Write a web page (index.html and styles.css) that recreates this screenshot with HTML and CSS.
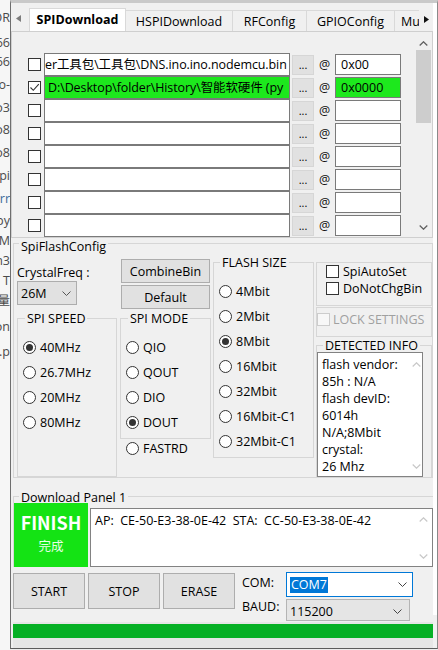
FILE: index.html
```html
<!DOCTYPE html>
<html lang="zh">
<head>
<meta charset="utf-8">
<title>ESP Flash Download Tool</title>
<link rel="stylesheet" href="styles.css">
</head>
<body>
<div class="screen">
  <div class="behind">
    <div class="bl"><span>OR</span></div>
    <div class="bl"><span>66</span></div>
    <div class="bl"><span>66</span></div>
    <div class="bl"><span>o-</span></div>
    <div class="bl"><span>o3</span></div>
    <div class="bl"><span>o8</span></div>
    <div class="bl"><span>o8</span></div>
    <div class="bl"><span>spi</span></div>
    <div class="bl blue"><span>urr</span></div>
    <div class="bl"><span>py</span></div>
    <div class="bl"><span>RM</span></div>
    <div class="bl"><span>n3</span></div>
    <div class="bl"><span>T</span></div>
    <div class="bl"><span>量</span></div>
    <div class="bl"><span>on</span></div>
    <div class="bl"><span>.p</span></div>
  </div>

  <div class="win">
    <div class="main">
      <div class="tabs">
        <div class="tab-nav-l"><svg width="5" height="7" viewBox="0 0 5 7"><path d="M5 0 L0 3.5 L5 7 Z" fill="#7c7c7c"/></svg></div>
        <div class="tab active">SPIDownload</div>
        <div class="tab t-hspi">HSPIDownload</div>
        <div class="tab t-rf">RFConfig</div>
        <div class="tab t-gpio">GPIOConfig</div>
        <div class="tab t-mu">Mu</div>
        <div class="tab-nav-r"><svg width="5" height="7" viewBox="0 0 5 7"><path d="M0 0 L5 3.5 L0 7 Z" fill="#111"/></svg></div>
      </div>

      <div class="panel">
        <div class="list">
          <div class="row">
            <span class="cb"></span>
            <div class="path"><span class="cut">er工具包\工具包\DNS.ino.ino.nodemcu.bin</span></div>
            <span class="dots">...</span>
            <span class="at">@</span>
            <span class="addr">0x00</span>
          </div>
          <div class="row">
            <span class="cb"><svg width="11" height="11" viewBox="0 0 11 11"><path d="M1.5 5.5 L4.3 8.3 L9.8 2.2" fill="none" stroke="#333" stroke-width="1.1"/></svg></span>
            <div class="path hit">D:\Desktop\folder\History\智能软硬件 (py</div>
            <span class="dots">...</span>
            <span class="at">@</span>
            <span class="addr hit">0x0000</span>
          </div>
          <div class="row"><span class="cb"></span><div class="path"></div><span class="dots">...</span><span class="at">@</span><span class="addr"></span></div>
          <div class="row"><span class="cb"></span><div class="path"></div><span class="dots">...</span><span class="at">@</span><span class="addr"></span></div>
          <div class="row"><span class="cb"></span><div class="path"></div><span class="dots">...</span><span class="at">@</span><span class="addr"></span></div>
          <div class="row"><span class="cb"></span><div class="path"></div><span class="dots">...</span><span class="at">@</span><span class="addr"></span></div>
          <div class="row"><span class="cb"></span><div class="path"></div><span class="dots">...</span><span class="at">@</span><span class="addr"></span></div>
          <div class="row"><span class="cb"></span><div class="path"></div><span class="dots">...</span><span class="at">@</span><span class="addr"></span></div>
        </div>
        <div class="vscroll">
          <div class="vs-up"><svg width="9" height="5" viewBox="0 0 9 5"><polyline points="0.7,4.5 4.5,0.8 8.3,4.5" fill="none" stroke="#606060" stroke-width="1.3"/></svg></div>
          <div class="vs-thumb"></div>
          <div class="vs-fill"></div>
          <div class="vs-down"><svg width="9" height="5" viewBox="0 0 9 5"><polyline points="0.7,0.5 4.5,4.2 8.3,0.5" fill="none" stroke="#606060" stroke-width="1.3"/></svg></div>
        </div>
      </div>

      <div class="gb sfc">
        <span class="gt">SpiFlashConfig</span>
        <div class="sfc-body">
          <div class="col-a">
            <div class="lbl">CrystalFreq :</div>
            <div class="sel"><span>26M</span><svg width="9" height="5" viewBox="0 0 9 5"><polyline points="0.5,0.5 4.5,4.5 8.5,0.5" fill="none" stroke="#555" stroke-width="1"/></svg></div>
            <div class="gb spd">
              <span class="gt">SPI SPEED</span>
              <div class="radios">
                <div class="rad"><span class="rc on"></span>40MHz</div>
                <div class="rad"><span class="rc"></span>26.7MHz</div>
                <div class="rad"><span class="rc"></span>20MHz</div>
                <div class="rad"><span class="rc"></span>80MHz</div>
              </div>
            </div>
          </div>

          <div class="col-b">
            <div class="btn b-combine">CombineBin</div>
            <div class="btn b-default">Default</div>
            <div class="gb mode">
              <span class="gt">SPI MODE</span>
              <div class="radios">
                <div class="rad"><span class="rc"></span>QIO</div>
                <div class="rad"><span class="rc"></span>QOUT</div>
                <div class="rad"><span class="rc"></span>DIO</div>
                <div class="rad"><span class="rc on"></span>DOUT</div>
              </div>
            </div>
            <div class="rad fastrd"><span class="rc"></span>FASTRD</div>
          </div>

          <div class="col-c">
            <div class="gb fsz">
              <span class="gt">FLASH SIZE</span>
              <div class="radios">
                <div class="rad"><span class="rc"></span>4Mbit</div>
                <div class="rad"><span class="rc"></span>2Mbit</div>
                <div class="rad"><span class="rc on"></span>8Mbit</div>
                <div class="rad"><span class="rc"></span>16Mbit</div>
                <div class="rad"><span class="rc"></span>32Mbit</div>
                <div class="rad"><span class="rc"></span>16Mbit-C1</div>
                <div class="rad"><span class="rc"></span>32Mbit-C1</div>
              </div>
            </div>
          </div>

          <div class="col-d">
            <div class="gb box1">
              <div class="chk"><span class="cb"></span>SpiAutoSet</div>
              <div class="chk"><span class="cb"></span>DoNotChgBin</div>
            </div>
            <div class="gb box2">
              <span class="cb dis"></span><span class="dis-text">LOCK SETTINGS</span>
            </div>
            <div class="gb det">
              <span class="gt">DETECTED INFO</span>
              <div class="info">
                <div class="info-text">
                  <div>flash vendor:</div>
                  <div>85h : N/A</div>
                  <div>flash devID:</div>
                  <div>6014h</div>
                  <div>N/A;8Mbit</div>
                  <div>crystal:</div>
                  <div>26 Mhz</div>
                </div>
                <div class="info-sb">
                  <svg width="9" height="5" viewBox="0 0 9 5"><polyline points="0.7,4.5 4.5,0.8 8.3,4.5" fill="none" stroke="#c8c8c8" stroke-width="1.2"/></svg>
                  <svg width="9" height="5" viewBox="0 0 9 5"><polyline points="0.7,0.5 4.5,4.2 8.3,0.5" fill="none" stroke="#c8c8c8" stroke-width="1.2"/></svg>
                </div>
              </div>
            </div>
          </div>
        </div>
      </div>

      <div class="gb dl">
        <span class="gt">Download Panel 1</span>
        <div class="dl-row">
          <div class="finish">
            <div class="fin-en">FINISH</div>
            <div class="fin-zh">完成</div>
          </div>
          <div class="log">
            <div class="log-text">AP:  CE-50-E3-38-0E-42  STA:  CC-50-E3-38-0E-42</div>
            <div class="log-sb">
              <svg width="9" height="5" viewBox="0 0 9 5"><polyline points="0.7,4.5 4.5,0.8 8.3,4.5" fill="none" stroke="#c8c8c8" stroke-width="1.2"/></svg>
              <svg width="9" height="5" viewBox="0 0 9 5"><polyline points="0.7,0.5 4.5,4.2 8.3,0.5" fill="none" stroke="#c8c8c8" stroke-width="1.2"/></svg>
            </div>
          </div>
        </div>
      </div>

      <div class="ctl">
        <div class="btn bbtn">START</div>
        <div class="btn bbtn">STOP</div>
        <div class="btn bbtn last">ERASE</div>
        <div class="com">
          <div class="com-row">
            <span class="com-lbl">COM:</span>
            <div class="com-sel"><span class="hl">COM7</span><svg width="9" height="5" viewBox="0 0 9 5"><polyline points="0.5,0.5 4.5,4.5 8.5,0.5" fill="none" stroke="#444" stroke-width="1"/></svg></div>
          </div>
          <div class="com-row baud-row">
            <span class="com-lbl baud-lbl">BAUD:</span>
            <div class="baud-sel"><span>115200</span><svg width="9" height="5" viewBox="0 0 9 5"><polyline points="0.5,0.5 4.5,4.5 8.5,0.5" fill="none" stroke="#444" stroke-width="1"/></svg></div>
          </div>
        </div>
      </div>

      <div class="prog"><div class="prog-bar"></div></div>
    </div>
    <div class="edge"></div>
  </div>
</div>
</body>
</html>
```

FILE: styles.css
```css
* { box-sizing: border-box; margin: 0; padding: 0; }
html, body { width: 438px; height: 650px; overflow: hidden; }
body {
  background: #ececec;
  font-family: "Open Sans", "Noto Sans CJK SC", sans-serif;
  font-size: 12.5px;
  line-height: 17px;
  color: #000;
}
.screen { display: flex; height: 650px; }

/* window behind */
.behind { width: 10px; flex: none; height: 650px; overflow: hidden; padding-top: 10px; background: #f6f6f6; color: #4a4a4a; }
.bl { display: flex; justify-content: flex-end; height: 23px; line-height: 16px; white-space: nowrap; }
.bl:nth-child(1) { height: 25px; }
.bl:nth-child(2) { height: 19px; }
.bl:nth-child(5), .bl:nth-child(9) { height: 22px; }
.bl:nth-child(10), .bl:nth-child(11), .bl:nth-child(12), .bl:nth-child(13) { height: 20px; }
.bl:nth-child(14) { height: 26px; }
.bl:nth-child(15) { height: 25px; }
.bl.blue { color: #3d6a9a; }

/* main window */
.win {
  width: 428px; height: 649px; flex: none;
  border-top: 3px solid #c9c9c9;
  border-left: 1px solid #6e6e6e;
  border-right: 1px solid #8a8a8a;
  border-bottom: 1px solid #5c5c5c;
  background: #f0f0f0;
  display: flex; align-items: flex-start;
}
.main { width: 422px; flex: none; }
.edge { width: 4px; height: 612px; background: #fff; flex: none; }

/* tabs */
.tabs { display: flex; align-items: flex-end; height: 28px; }
.tab-nav-l { width: 18px; height: 28px; flex: none; padding: 12px 0 0 5px; }
.tab-nav-l svg, .tab-nav-r svg { display: block; }
.tab {
  height: 21px; flex: none; margin-left: -1px;
  border: 1px solid #d9d9d9; border-bottom: 0;
  background: #f0f0f0;
  display: flex; align-items: center; justify-content: center;
  white-space: nowrap;
}
.tab.active { height: 23px; width: 97px; margin-left: 0; background: #fff; font-weight: 700; padding-bottom: 2px; }
.t-hspi { width: 108px; }
.t-rf { width: 75px; }
.t-gpio { width: 89px; }
.t-mu { width: 25px; justify-content: flex-start; padding-left: 6px; overflow: hidden; border-right: 0; }
.tab-nav-r { flex: 1; height: 28px; padding: 13px 0 0 5px; }

/* file list panel */
.panel { height: 207px; border: 1px solid #cfcfcf; display: flex; background: #f0f0f0; }
.list { flex: 1; padding: 21px 0 0 16px; }
.row { display: flex; align-items: center; height: 23px; }
.cb {
  width: 13px; height: 13px; flex: none;
  border: 1px solid #333; background: #fff;
  display: flex; align-items: center; justify-content: center;
}
.cb svg { display: block; }
.path {
  width: 246px; height: 23px; margin-left: 3px; flex: none;
  border: 1px solid #7a7a7a; background: #fff;
  padding: 0 3px; line-height: 21px; letter-spacing: -0.1px;
  overflow: hidden; white-space: nowrap;
}
.path .cut { display: inline-block; margin-left: -3px; }
.hit { background: #1de81d; }
.dots {
  width: 22px; height: 20px; margin-left: 2px; flex: none;
  background: #e1e1e1; border: 1px solid #d6d6d6;
  display: flex; align-items: center; justify-content: center;
  font-size: 11px; line-height: 14px;
}
.at { width: 21px; flex: none; text-align: center; color: #111; }
.addr {
  width: 66px; height: 21px; flex: none;
  border: 1px solid #7a7a7a; background: #fff;
  padding-left: 5px; line-height: 19px;
}
.addr.hit { background: #1de81d; }

.vscroll { width: 17px; flex: none; display: flex; flex-direction: column; align-items: center; }
.vs-up { height: 18px; display: flex; align-items: flex-end; padding-bottom: 4px; }
.vs-thumb { width: 15px; height: 73px; background: #cdcdcd; }
.vs-fill { flex: 1; }
.vs-down { height: 19px; display: flex; align-items: center; }
.vscroll svg { display: block; }

/* group boxes */
.gb { border: 1px solid #d6d6d6; }
.gt { display: block; width: max-content; background: #f0f0f0; padding: 0 2px; line-height: 17px; white-space: nowrap; }

.sfc { margin: 5px 0 0 2px; width: 420px; height: 235px; }
.sfc > .gt { margin: -6px 0 0 5px; }
.sfc-body { display: flex; align-items: flex-start; padding-left: 3px; }

.col-a { width: 100px; flex: none; }
.lbl { margin-top: 9px; }
.sel {
  width: 60px; height: 24px;
  border: 1px solid #adadad; background: #e1e1e1;
  display: flex; align-items: center; justify-content: space-between;
  padding: 0 5px 0 3px;
}
.sel svg, .com-sel svg, .baud-sel svg, .info-sb svg, .log-sb svg { display: block; }
.spd { margin-top: 13px; height: 159px; width: 100px; }
.spd > .gt { margin: -9px 0 0 7px; }
.radios { margin-top: 8px; }
.rad { display: flex; align-items: center; height: 25px; padding-left: 5px; white-space: nowrap; }
.rc {
  width: 13px; height: 13px; flex: none; margin-right: 4px;
  border: 1px solid #333; border-radius: 50%; background: #fff;
  display: flex; align-items: center; justify-content: center;
}
.rc.on::after { content: ""; width: 7px; height: 7px; border-radius: 50%; background: #333; }

.col-b { width: 91px; flex: none; margin-left: 3px; }
.btn {
  background: #e1e1e1; border: 1px solid #adadad;
  display: flex; align-items: center; justify-content: center;
}
.b-combine { margin: 4px 0 0 1px; width: 89px; height: 24px; }
.b-default { margin: 2px 0 0 1px; width: 89px; height: 24px; }
.mode { margin-top: 9px; height: 121px; }
.mode > .gt { margin: -9px 0 0 7px; }
.fastrd { height: 18px; padding-left: 6px; }

.col-c { width: 101px; flex: none; margin-left: 2px; }
.fsz { margin-top: 7px; height: 196px; }
.fsz > .gt { margin: -9px 0 0 6px; }

.col-d { width: 116px; flex: none; margin-left: 2px; }
.box1 { margin-top: 7px; height: 44px; }
.chk { display: flex; align-items: center; height: 17px; padding-left: 9px; white-space: nowrap; }
.chk .cb { margin-right: 4px; }
.box2 { margin-top: 1px; height: 30px; display: flex; align-items: flex-start; padding-top: 5px; }
.cb.dis { border-color: #cccccc; background: #f7f7f7; }
.dis-text { margin: -2px 0 0 3px; color: #a0a0a0; white-space: nowrap; }
.det { margin-top: 8px; height: 132px; border-bottom: 0; }
.det > .gt { margin: -9px 0 0 6px; }
.info {
  margin-top: -2px; width: 106px; height: 125px;
  border: 1px solid #828282; background: #fff;
  display: flex;
}
.info-text { flex: 1; padding: 3px 0 0 4px; white-space: nowrap; }
.info-sb { width: 12px; flex: none; display: flex; flex-direction: column; justify-content: space-between; align-items: center; padding: 9px 0 7px; }

/* download panel */
.dl { margin: 18px 0 0 2px; width: 420px; border-right: 0; border-bottom: 0; }
.dl > .gt { margin: -8px 0 0 5px; }
.dl-row { display: flex; align-items: flex-start; margin-top: -3px; }
.finish {
  width: 74px; height: 64px; flex: none;
  background: #14e314; color: #fff;
  display: flex; flex-direction: column; align-items: center;
  padding-top: 8px;
}
.fin-en { font-family: "Noto Sans CJK SC", sans-serif; font-weight: 700; font-size: 18px; line-height: 22px; }
.fin-zh { font-family: "Noto Sans CJK SC", sans-serif; font-size: 12.5px; line-height: 17px; margin-top: 4px; color: #e6ffe6; }
.log {
  margin: 5px 0 0 2px; width: 343px; height: 59px;
  border: 1px solid #828282; background: #fff;
  display: flex;
}
.log-text { flex: 1; padding: 3px 0 0 4px; white-space: pre; }
.log-sb { width: 17px; flex: none; display: flex; flex-direction: column; justify-content: space-between; align-items: center; padding: 8px 0 7px; }

/* controls */
.ctl { display: flex; align-items: flex-start; margin-top: 5px; padding-left: 2px; }
.bbtn { width: 72px; height: 36px; margin: 1px 3px 0 0; flex: none; }
.bbtn.last { margin-right: 0; }
.com { margin-left: 7px; }
.com-row { display: flex; align-items: flex-start; }
.com-lbl { width: 44px; flex: none; margin-top: 2px; }
.baud-lbl { margin-top: -1px; }
.com-sel {
  width: 127px; height: 25px;
  border: 1px solid #0078d7; background: #fff;
  display: flex; align-items: center; justify-content: space-between;
  padding: 0 5px 0 3px;
}
.hl { background: #0078d7; color: #fff; line-height: 16px; padding: 0 1px; }
.baud-row { margin-top: 2px; }
.baud-sel {
  width: 124px; height: 22px;
  border: 1px solid #b4b4b4; background: #e5e5e5;
  display: flex; align-items: center; justify-content: space-between;
  padding: 3px 7px 0 3px;
}

.prog { margin: 1px 0 0 2px; width: 420px; height: 26px; background: #e6e6e6; padding-top: 2px; }
.prog-bar { height: 14px; background: #06b025; }
```
